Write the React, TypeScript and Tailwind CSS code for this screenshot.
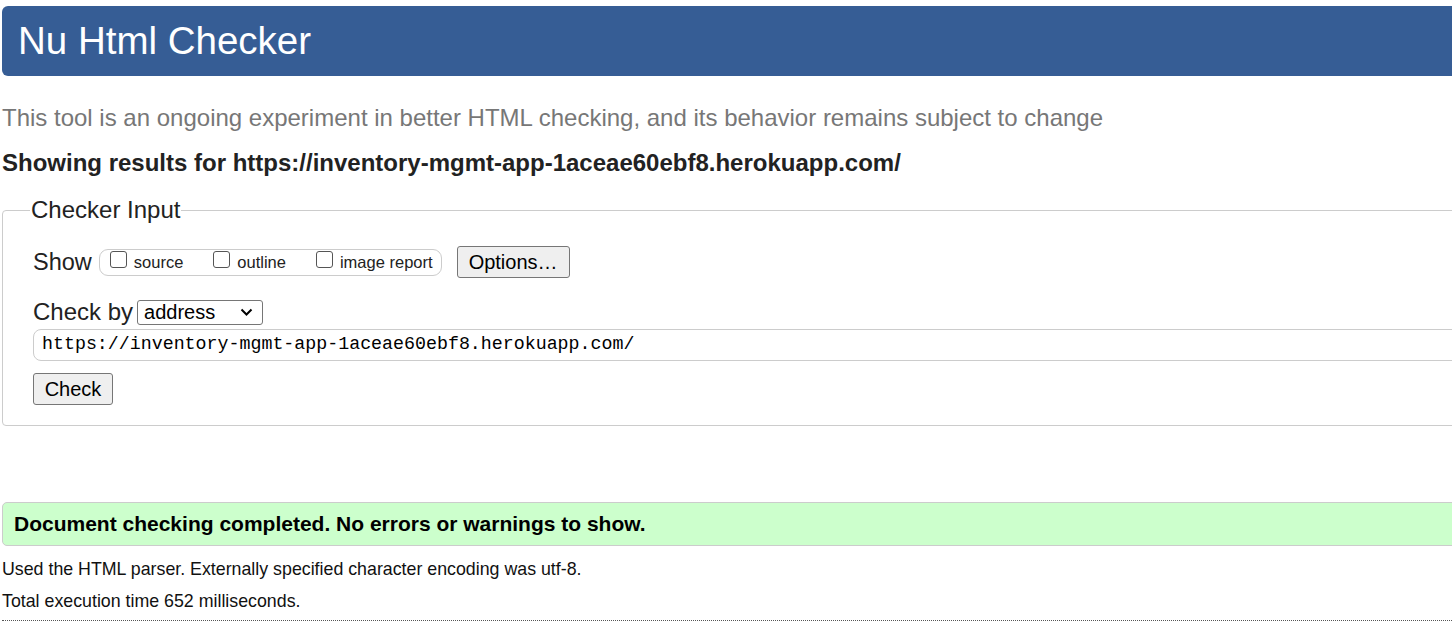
export default function App() {
  const sans = "font-['Liberation_Sans',Arial,sans-serif]";
  return (
    <div className={`${sans} w-[1452px] h-[625px] overflow-hidden bg-white text-[#111]`}>
      <div className="w-[1470px] pl-[2px] pt-[6px]">
        <h1 className="h-[70px] rounded-l-[6px] bg-[#365d95] pl-[16px] text-[38.5px] leading-[70px] text-white">
          Nu Html Checker
        </h1>
        <p className="mt-[28px] text-[24px] leading-[28px] text-[#777]">
          This tool is an ongoing experiment in better HTML checking, and its behavior remains subject to change
        </p>
        <p className="mt-[17px] text-[24px] leading-[28px] font-bold text-[#222]">
          Showing results for https://inventory-mgmt-app-1aceae60ebf8.herokuapp.com/
        </p>

        <fieldset className="mt-[20px] rounded-[4px] border border-[#ccc] pl-[30px] pb-[20px]">
          <legend className="-ml-[3px] px-[1px] text-[24px] leading-[26px] text-[#222]">Checker Input</legend>
          <div className="mt-[23px] flex items-center">
            <span className="text-[23.5px] leading-[26px] text-[#222]">Show</span>
            <div className="ml-[7px] flex h-[27px] items-center rounded-[9px] border border-[#ccc] pl-[10px] pr-[8px] text-[16.5px] text-[#222]">
              <label className="flex items-center">
                <span className="mb-[5px] h-[17px] w-[17px] rounded-[3px] border border-[#555] bg-white" />
                <span className="ml-[7px]">source</span>
              </label>
              <label className="ml-[30px] flex items-center">
                <span className="mb-[5px] h-[17px] w-[17px] rounded-[3px] border border-[#555] bg-white" />
                <span className="ml-[7px]">outline</span>
              </label>
              <label className="ml-[30px] flex items-center">
                <span className="mb-[5px] h-[17px] w-[17px] rounded-[3px] border border-[#555] bg-white" />
                <span className="ml-[7px]">image report</span>
              </label>
            </div>
            <button className="ml-[15px] h-[32px] w-[113px] rounded-[3px] border border-[#767676] bg-[#efefef] text-[20px] text-black">
              Options…
            </button>
          </div>

          <div className="mt-[21px] flex items-center">
            <span className="text-[24px] leading-[26px] text-[#222]">Check by</span>
            <div className="ml-[4px] flex h-[25px] w-[126px] items-center justify-between rounded-[3px] border border-[#767676] pl-[6px] pr-[9px] text-[20px] text-black">
              <span>address</span>
              <svg width="13" height="8" viewBox="0 0 13 8" fill="none" stroke="#000" strokeWidth="2">
                <path d="M1.5 1.5l5 5 5-5" />
              </svg>
            </div>
          </div>

          <div className="mt-[4px] flex h-[32px] items-center rounded-[8px] border border-[#ccc] pl-[8px] font-['Liberation_Mono',monospace] text-[18.3px] text-black">
            https://inventory-mgmt-app-1aceae60ebf8.herokuapp.com/
          </div>

          <button className="mt-[12px] h-[32px] w-[80px] rounded-[3px] border border-[#767676] bg-[#efefef] text-[20px] text-black">
            Check
          </button>
        </fieldset>

        <div className="mt-[76px] flex h-[44px] items-center rounded-l-[5px] border border-[#ccc] bg-[#ccffcc] pl-[11px] text-[21px] font-bold text-black">
          Document checking completed. No errors or warnings to show.
        </div>
        <p className="mt-[12px] text-[17.8px] leading-[22px] text-[#111]">
          Used the HTML parser. Externally specified character encoding was utf-8.
        </p>
        <p className="mt-[10px] text-[17.8px] leading-[22px] text-[#111]">Total execution time 652 milliseconds.</p>
        <div className="mt-[8px] border-t border-dotted border-[#555]" />
      </div>
    </div>
  );
}
